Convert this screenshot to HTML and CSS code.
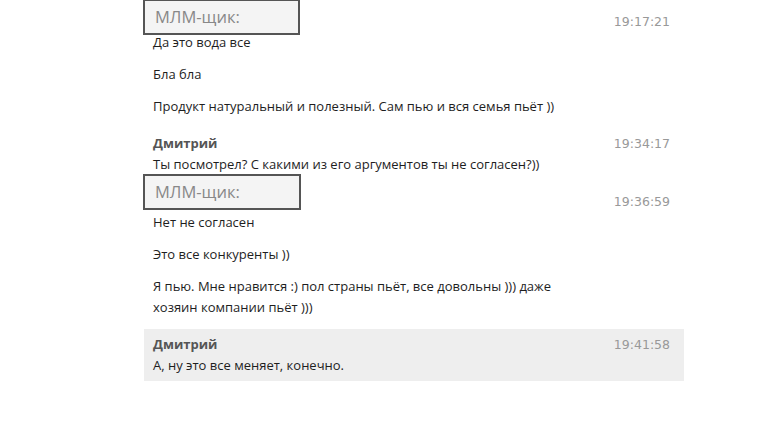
FILE: index.html
```html
<!DOCTYPE html>
<html>
<head>
<meta charset="utf-8">
<link rel="stylesheet" href="styles.css">
</head>
<body>
<div class="chat">
  <div class="msg">
    <div class="head"><span class="name"></span><span class="time">19:17:21</span></div>
    <p>Да это вода все</p>
    <p>Бла бла</p>
    <p>Продукт натуральный и полезный. Сам пью и вся семья пьёт ))</p>
  </div>
  <div class="msg">
    <div class="head"><span class="name">Дмитрий</span><span class="time">19:34:17</span></div>
    <p>Ты посмотрел? С какими из его аргументов ты не согласен?))</p>
  </div>
  <div class="msg">
    <div class="head"><span class="name"></span><span class="time">19:36:59</span></div>
    <p>Нет не согласен</p>
    <p>Это все конкуренты ))</p>
    <p>Я пью. Мне нравится :) пол страны пьёт, все довольны ))) даже хозяин компании пьёт )))</p>
  </div>
  <div class="msg active">
    <div class="head"><span class="name">Дмитрий</span><span class="time">19:41:58</span></div>
    <p>А, ну это все меняет, конечно.</p>
  </div>
  <div class="mask mask-1">МЛМ-щик:</div>
  <div class="mask mask-2">МЛМ-щик:</div>
</div>
</body>
</html>
```
FILE: styles.css
```css
html, body {
  margin: 0;
  padding: 0;
  background: #fff;
}
body {
  font-family: "Open Sans", "Noto Sans", sans-serif;
  font-size: 13px;
  color: #1e1e1e;
}
.chat {
  position: relative;
  width: 540px;
  margin-left: 144px;
  padding-top: 6px;
  display: flex;
  flex-direction: column;
  gap: 6px;
}
.msg {
  padding: 4px 14px 5px 9px;
}
.msg.active {
  background: #eeeeee;
}
.head {
  display: flex;
  justify-content: space-between;
  align-items: center;
  height: 22px;
}
.name {
  font-weight: bold;
  color: #555;
}
.time {
  font-family: "DejaVu Sans", sans-serif;
  font-size: 12.5px;
  color: #999;
}
.msg p {
  margin: 0 0 11px;
  line-height: 21px;
  max-width: 425px;
}
.msg p:last-child {
  margin-bottom: 0;
}
.mask {
  position: absolute;
  left: -1px;
  height: 32px;
  border: 2px solid #555;
  background: #f4f4f4;
  color: #888;
  font-size: 16.5px;
  line-height: 32px;
  padding-left: 10px;
  box-sizing: content-box;
}
.mask-1 {
  top: -1px;
  width: 143px;
}
.mask-2 {
  top: 174px;
  width: 144px;
}
```
